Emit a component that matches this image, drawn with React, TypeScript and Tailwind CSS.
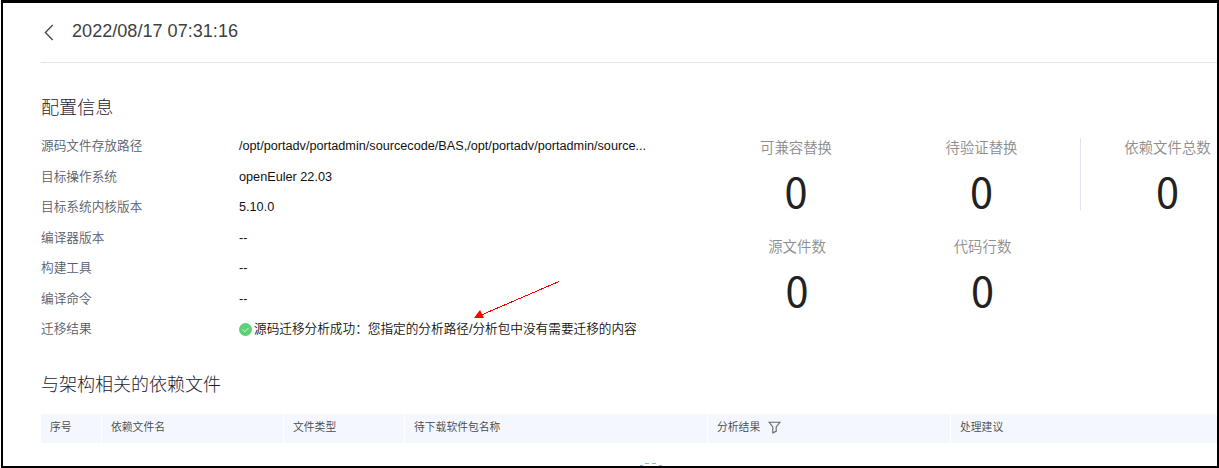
import type { ReactNode } from 'react';

const success = (
  <span className="flex items-center font-[350] tracking-[-0.03px]">
    <svg width="13" height="13" viewBox="0 0 13 13" className="mr-[2px] shrink-0">
      <circle cx="6.5" cy="6.5" r="6.5" fill="#5dd176" />
      <path d="M3.4 6.3 5.8 8.7 9.7 4.8" fill="none" stroke="#d5f6dc" strokeWidth="1" />
    </svg>
    源码迁移分析成功：您指定的分析路径/分析包中没有需要迁移的内容
  </span>
);

const details: { label: string; value: ReactNode }[] = [
  {
    label: '源码文件存放路径',
    value: '/opt/portadv/portadmin/sourcecode/BAS,/opt/portadv/portadmin/source...',
  },
  { label: '目标操作系统', value: 'openEuler 22.03' },
  { label: '目标系统内核版本', value: '5.10.0' },
  { label: '编译器版本', value: '--' },
  { label: '构建工具', value: '--' },
  { label: '编译命令', value: '--' },
  { label: '迁移结果', value: success },
];

const columns = [
  { title: '序号', width: 'w-[60px]' },
  { title: '依赖文件名', width: 'w-[181px]' },
  { title: '文件类型', width: 'w-[120px]' },
  { title: '待下载软件包名称', width: 'w-[302px]' },
  { title: '分析结果', width: 'w-[242px]', filter: true },
  { title: '处理建议', width: 'flex-1' },
];

function Stat({ label }: { label: string }) {
  return (
    <div className="flex h-[99px] flex-col items-center whitespace-nowrap">
      <span className="h-[20px] text-[14.4px] leading-[20px] font-[350] text-[#8d8d8d]">{label}</span>
      <span className="mt-[8px] font-['Noto_Sans_CJK_SC',sans-serif] text-[41.5px] leading-[48px] font-normal text-[#222]">
        0
      </span>
    </div>
  );
}

export default function App() {
  return (
    <div className="h-[468px] w-full overflow-hidden bg-white pl-px font-['Liberation_Sans','Noto_Sans_CJK_SC',sans-serif] font-light">
      <div className="relative flex h-full flex-col overflow-hidden border-2 border-t-[3px] border-black pl-[38px]">
        <header className="flex h-[60px] shrink-0 items-center border-b border-[#dfe5ec] pb-[3px]">
          <svg width="10" height="17" viewBox="0 0 10 17" className="mt-[2px] ml-[3px]">
            <path d="M8.7 1 1.4 8.5 8.7 16" fill="none" stroke="#454545" strokeWidth="1.3" />
          </svg>
          <h1 className="mb-px ml-[18px] text-[18.1px] leading-[28px] font-normal text-[#3f3f3f]">
            2022/08/17 07:31:16
          </h1>
        </header>

        <div className="flex h-[281px] shrink-0">
          <section className="w-[662px] shrink-0">
            <h2 className="pt-[32px] text-[18.1px] leading-[27px] text-[#1d2230]">配置信息</h2>
            <dl className="mt-[9.5px]">
              {details.map((item) => (
                <div key={item.label} className="flex h-[30.5px] items-center text-[12.68px] whitespace-nowrap">
                  <dt className="w-[198px] font-[350] text-[#575d6c]">{item.label}</dt>
                  <dd className="text-[#111]">{item.value}</dd>
                </div>
              ))}
            </dl>
          </section>

          <section className="flex shrink-0 pt-[75px]">
            <div className="w-[186px]">
              <Stat label="可兼容替换" />
              <div className="pl-[2px]">
                <Stat label="源文件数" />
              </div>
            </div>
            <div className="w-[185px]">
              <Stat label="待验证替换" />
              <div className="pl-[2px]">
                <Stat label="代码行数" />
              </div>
            </div>
            <div className="ml-[6px] h-[72px] w-px bg-[#dfe5ef]" />
            <div className="w-[173px]">
              <Stat label="依赖文件总数" />
            </div>
          </section>
        </div>

        <h2 className="mt-[28px] shrink-0 text-[18px] leading-[27px] text-[#1d2230]">与架构相关的依赖文件</h2>
        <div className="mt-[15px] flex h-[29px] shrink-0 gap-px">
          {columns.map((col) => (
            <div
              key={col.title}
              className={`${col.width} flex items-center bg-[#f4f7fe] pb-[2px] pl-[9px] text-[10.8px] font-[350] text-[#484848]`}
            >
              {col.title}
              {col.filter && (
                <svg width="13" height="13" viewBox="0 0 13 13" className="ml-[8px]">
                  <path
                    d="M1 1.2H12L8.2 6V10.3L4.8 11.8V6Z"
                    fill="none"
                    stroke="#686868"
                    strokeWidth="1.1"
                  />
                </svg>
              )}
            </div>
          ))}
        </div>
        <div className="pt-[19px] pl-[599px]">
          <svg width="24" height="4" viewBox="0 0 24 4">
            <path d="M5 1.5H9M12 1.5H16M0 3.5H3M19 3.5H22" stroke="#7ebbf3" strokeWidth="1" />
          </svg>
        </div>

        <svg
          width="92"
          height="44"
          viewBox="0 0 92 44"
          className="pointer-events-none absolute top-[277px] left-[468px]"
        >
          <path d="M88 1.5 8 36" stroke="#f00" strokeWidth="1" shapeRendering="crispEdges" />
          <path d="M3 38 9 30 13 38Z" fill="#f00" />
        </svg>
      </div>
    </div>
  );
}
